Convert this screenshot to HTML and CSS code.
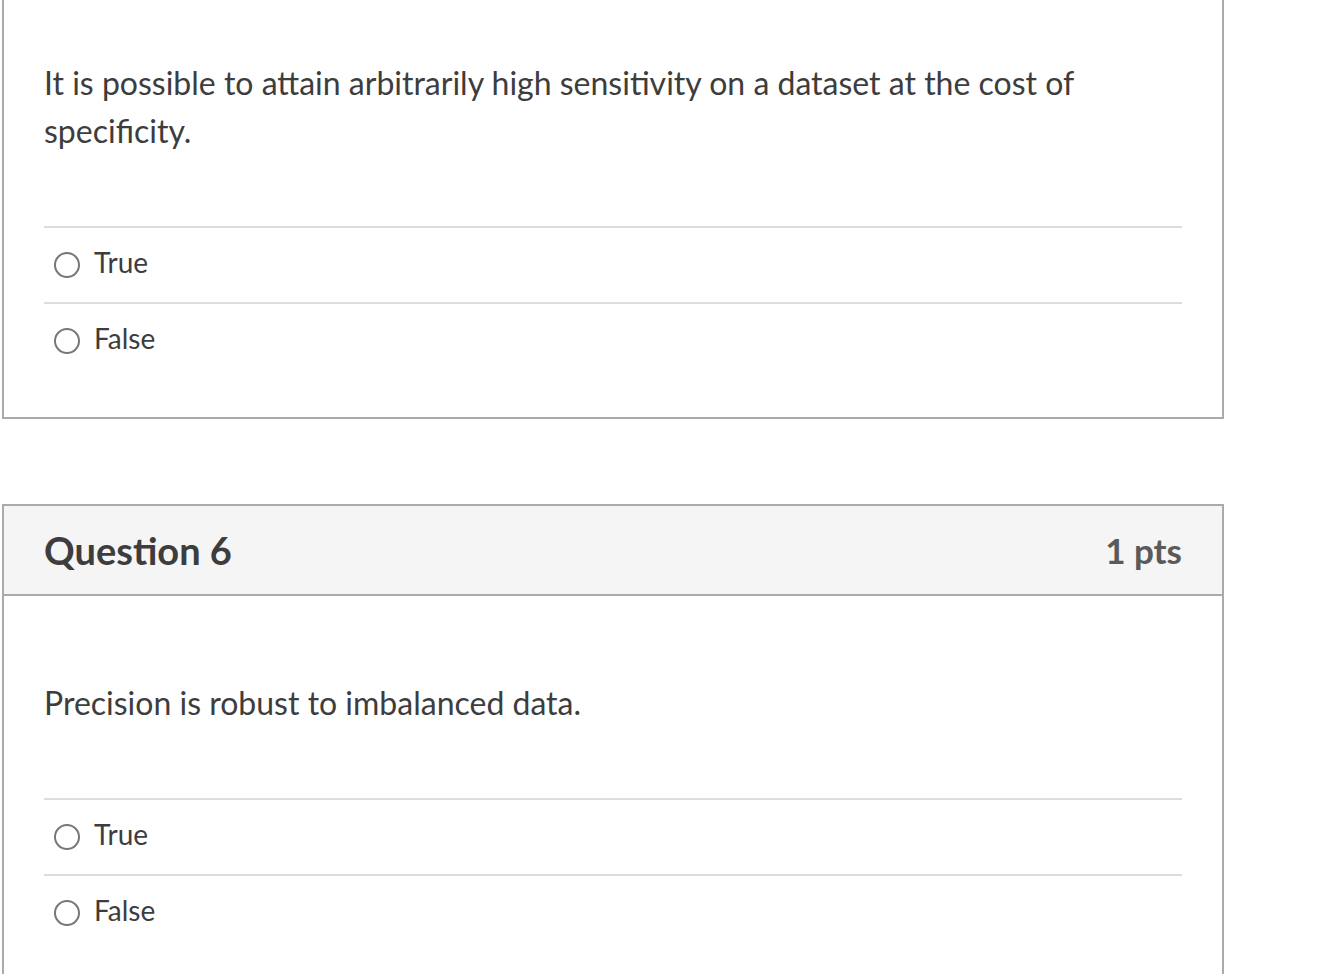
FILE: index.html
```html
<!DOCTYPE html>
<html>
<head>
<meta charset="utf-8">
<link rel="stylesheet" href="styles.css">
</head>
<body>
<div class="page">
  <div class="card cut">
    <div class="content">
      <p class="qtext">It is possible to attain arbitrarily high sensitivity on a dataset at the cost of specificity.</p>
      <div class="answers">
        <div class="answer"><span class="radio"></span><span class="label">True</span></div>
        <div class="answer"><span class="radio"></span><span class="label">False</span></div>
      </div>
    </div>
  </div>

  <div class="card">
    <div class="header">
      <h2 class="title">Question 6</h2>
      <span class="pts">1 pts</span>
    </div>
    <div class="content first">
      <p class="qtext">Precision is robust to imbalanced data.</p>
      <div class="answers">
        <div class="answer"><span class="radio"></span><span class="label">True</span></div>
        <div class="answer"><span class="radio"></span><span class="label">False</span></div>
      </div>
    </div>
  </div>
</div>
</body>
</html>
```
FILE: styles.css
```css
html, body {
  margin: 0;
  padding: 0;
  background: #fff;
}
body {
  font-family: Lato, "Open Sans", sans-serif;
  color: #3d3d3d;
}
.page {
  padding-left: 2px;
  width: 1222px;
  display: flex;
  flex-direction: column;
  gap: 85px;
}
.card {
  border: 2px solid #aaaaaa;
  background: #fff;
}
.card.cut {
  border-top: 0;
}
.header {
  height: 88px;
  background: #f5f5f5;
  border-bottom: 2px solid #aaaaaa;
  display: flex;
  align-items: center;
  justify-content: space-between;
  padding: 0 40px;
}
.title {
  margin: 0;
  font-size: 38px;
  font-weight: 700;
  color: #3d3d3d;
}
.pts {
  font-size: 35px;
  font-weight: 700;
  color: #5a5a5a;
}
.content {
  padding: 59px 40px 39px 40px;
}
.content.first {
  padding-top: 83px;
}
.qtext {
  margin: 0 0 71px 0;
  font-size: 32px;
  line-height: 48px;
}
.answers {
  display: flex;
  flex-direction: column;
}
.answer {
  border-top: 2px solid #dddddd;
  height: 74px;
  display: flex;
  align-items: center;
  padding-left: 10px;
  font-size: 28px;
}
.radio {
  width: 22px;
  height: 22px;
  border: 2px solid #777777;
  border-radius: 50%;
  margin-right: 14px;
  flex: none;
}
.label {
  margin-bottom: 7px;
}
```
